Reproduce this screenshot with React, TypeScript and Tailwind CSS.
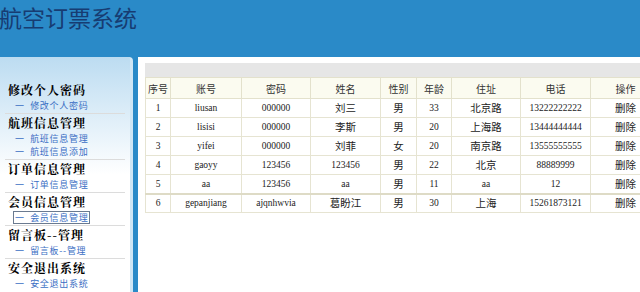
const menus = [
  { title: '修改个人密码', items: ['修改个人密码'] },
  { title: '航班信息管理', items: ['航班信息管理', '航班信息添加'] },
  { title: '订单信息管理', items: ['订单信息管理'] },
  { title: '会员信息管理', items: ['会员信息管理'], active: 0 },
  { title: '留言板--管理', items: ['留言板--管理'] },
  { title: '安全退出系统', items: ['安全退出系统'] },
];

const heads = ['序号', '账号', '密码', '姓名', '性别', '年龄', '住址', '电话', '操作'];
const widths = ['w-[25px]', 'w-[71px]', 'w-[69px]', 'w-[70px]', 'w-[36px]', 'w-[35px]', 'w-[69px]', 'w-[70px]', 'w-[70px]'];

const rows = [
  ['1', 'liusan', '000000', '刘三', '男', '33', '北京路', '13222222222'],
  ['2', 'lisisi', '000000', '李斯', '男', '20', '上海路', '13444444444'],
  ['3', 'yifei', '000000', '刘菲', '女', '20', '南京路', '13555555555'],
  ['4', 'gaoyy', '123456', '123456', '男', '22', '北京', '88889999'],
  ['5', 'aa', '123456', 'aa', '男', '11', 'aa', '12'],
  ['6', 'gepanjiang', 'ajqnhwvia', '葛盼江', '男', '30', '上海', '15261873121'],
];

const isCjk = (s: string) => /[\u4e00-\u9fff]/.test(s);

export default function App() {
  return (
    <div className="w-[640px] h-[292px] overflow-hidden bg-[#2a8ac8] flex flex-col font-['Noto_Sans_CJK_SC',sans-serif]">
      <header className="h-[57px] shrink-0 pt-[2px]">
        <h1 className="-ml-[1px] text-[23px] leading-[30px] text-[#173c72]">航空订票系统</h1>
      </header>

      <div className="flex flex-1 min-h-0">
        <aside className="w-[133px] shrink-0 bg-gradient-to-b from-[#bcdcf1] via-white to-white rounded-tr-[4px] border-r-[3px] border-[#cfe6f5] pt-[24px]">
          {menus.map((m) => (
            <div key={m.title} className="mx-[5px] border-b border-[#dcdcdc] last:border-b-0 pb-[1px]">
              <div className="pl-[3px] h-[18px] leading-[18px] text-[12px] font-bold text-black tracking-[1px] font-['Noto_Serif_CJK_SC','Noto_Sans_CJK_SC',serif]">
                {m.title}
              </div>
              {m.items.map((it, i) => (
                <div key={it} className="h-[13px] flex items-center pl-[8px]">
                  <span
                    className={`text-[9px] leading-[11px] text-[#3b6fc4] tracking-[0.7px] px-[1px] ${
                      m.active === i ? 'border border-[#6a7a90]' : 'border border-transparent'
                    }`}
                  >
                    一&nbsp;&nbsp;{it}
                  </span>
                </div>
              ))}
            </div>
          ))}
        </aside>

        <div className="w-[5px] shrink-0" />

        <main className="flex-1 bg-white pt-[6px] pl-[7px] overflow-hidden">
          <div className="w-[620px]">
            <div className="h-[14px] bg-[#e6e6e6]" />
            <table className="border-collapse table-fixed text-[10px] text-[#222]">
              <thead>
                <tr className="h-[21px] bg-[#fbfbf0]">
                  {heads.map((h, i) => (
                    <th key={h} className={`${widths[i]} border border-[#e3e1cc] font-normal text-[10px] text-[#333]`}>
                      {h}
                    </th>
                  ))}
                </tr>
              </thead>
              <tbody>
                {rows.map((r, ri) => (
                  <tr key={r[0]} className={`h-[19px] ${ri === 5 ? 'border-t-2 border-[#dedbc6]' : ''}`}>
                    {[...r, '删除'].map((c, ci) => (
                      <td
                        key={ci}
                        className={`border border-[#e6e4d2] text-center ${
                          isCjk(c)
                            ? "text-[10.5px] font-['Noto_Sans_CJK_SC',sans-serif]"
                            : "text-[9.5px] font-['Liberation_Serif',serif]"
                        }`}
                      >
                        {c}
                      </td>
                    ))}
                  </tr>
                ))}
              </tbody>
            </table>
          </div>
        </main>
      </div>
    </div>
  );
}
